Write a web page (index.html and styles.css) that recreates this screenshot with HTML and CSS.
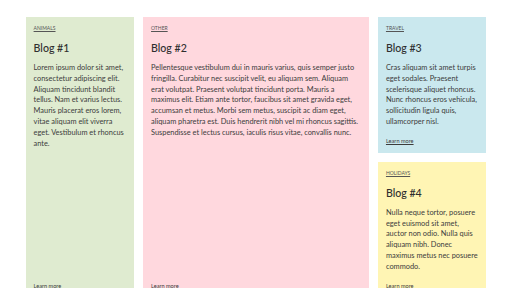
FILE: index.html
```html
<!DOCTYPE html>
<html>
<head>
<meta charset="utf-8">
<link rel="stylesheet" href="styles.css">
</head>
<body>
<div class="grid">
  <article class="card green c1">
    <a class="cat" href="#">Animals</a>
    <h2 class="title">Blog #1</h2>
    <p class="text">Lorem ipsum dolor sit amet, consectetur adipiscing elit. Aliquam tincidunt blandit tellus. Nam et varius lectus. Mauris placerat eros lorem, vitae aliquam elit viverra eget. Vestibulum et rhoncus ante.</p>
    <a class="more" href="#">Learn more</a>
  </article>
  <article class="card pink c2">
    <a class="cat" href="#">Other</a>
    <h2 class="title">Blog #2</h2>
    <p class="text">Pellentesque vestibulum dui in mauris varius, quis semper justo fringilla. Curabitur nec suscipit velit, eu aliquam sem. Aliquam erat volutpat. Praesent volutpat tincidunt porta. Mauris a maximus elit. Etiam ante tortor, faucibus sit amet gravida eget, accumsan et metus. Morbi sem metus, suscipit ac diam eget, aliquam pharetra est. Duis hendrerit nibh vel mi rhoncus sagittis. Suspendisse et lectus cursus, iaculis risus vitae, convallis nunc.</p>
    <a class="more" href="#">Learn more</a>
  </article>
  <article class="card blue c3">
    <a class="cat" href="#">Travel</a>
    <h2 class="title">Blog #3</h2>
    <p class="text">Cras aliquam sit amet turpis eget sodales. Praesent scelerisque aliquet rhoncus. Nunc rhoncus eros vehicula, sollicitudin ligula quis, ullamcorper nisl.</p>
    <a class="more" href="#">Learn more</a>
  </article>
  <article class="card yellow c4">
    <a class="cat" href="#">Holidays</a>
    <h2 class="title">Blog #4</h2>
    <p class="text">Nulla neque tortor, posuere eget euismod sit amet, auctor non odio. Nulla quis aliquam nibh. Donec maximus metus nec posuere commodo.</p>
    <a class="more" href="#">Learn more</a>
  </article>
</div>
</body>
</html>
```

FILE: styles.css
```css
html, body {
  margin: 0;
  padding: 0;
  background: #ffffff;
}
body {
  font-family: Lato, "Open Sans", sans-serif;
  color: #3c3c3c;
  padding-top: 17px;
}
.grid {
  width: 90%;
  margin: 0 auto;
  display: grid;
  grid-template-columns: repeat(4, 1fr);
  gap: 9px;
}
.card {
  display: flex;
  flex-direction: column;
  align-items: flex-start;
  padding: 8px 8px 8px;
}
.c1 { grid-column: 1; grid-row: 1 / span 2; }
.c2 { grid-column: 2 / span 2; grid-row: 1 / span 2; }
.c3 { grid-column: 4; grid-row: 1; }
.c4 { grid-column: 4; grid-row: 2; }
.green { background: #dfebd0; }
.pink { background: #ffd8de; }
.blue { background: #cae8ee; }
.yellow { background: #fff5b4; }
.cat {
  font-size: 5px;
  line-height: 7px;
  text-transform: uppercase;
  color: #555555;
  text-decoration: underline;
}
.title {
  font-size: 10.6px;
  line-height: 14px;
  font-weight: 500;
  margin: 9px 0 8px;
  color: #2e2e2e;
}
.text {
  font-size: 7.4px;
  line-height: 10.8px;
  margin: 0;
  color: #3c3c3c;
}
.more {
  margin-top: auto;
  padding-top: 9px;
  font-size: 5.6px;
  line-height: 8px;
  color: #3c3c3c;
  text-decoration: underline;
}
```
